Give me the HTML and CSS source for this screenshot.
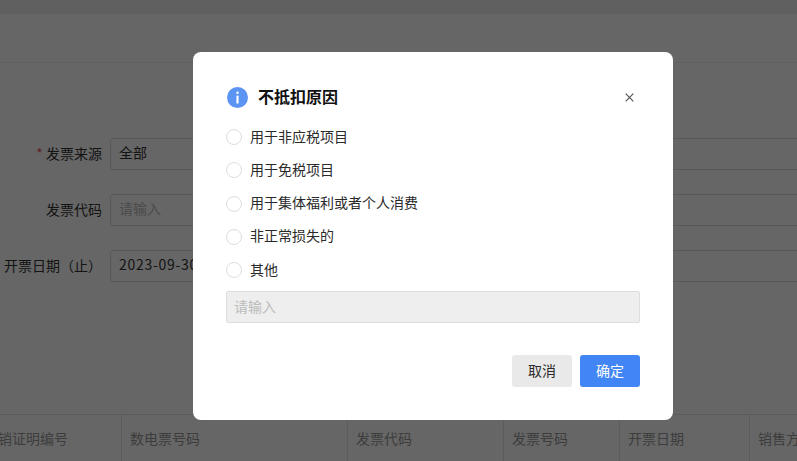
FILE: index.html
```html
<!DOCTYPE html>
<html lang="zh">
<head>
<meta charset="utf-8">
<title>不抵扣原因</title>
<link rel="stylesheet" href="styles.css">
</head>
<body>
<div class="page">
  <div class="topbar"></div>
  <div class="header"></div>
  <div class="form">
    <div class="row">
      <label class="label"><span class="req">*</span> 发票来源</label>
      <div class="field">全部</div>
      <div class="field-right"></div>
    </div>
    <div class="row">
      <label class="label">发票代码</label>
      <div class="field ph">请输入</div>
      <div class="field-right"></div>
    </div>
    <div class="row">
      <label class="label">开票日期（止）</label>
      <div class="field date">2023-09-30</div>
      <div class="field-right"></div>
    </div>
  </div>
  <div class="table-head">
    <div class="cell c1"><span class="clip">销证明编号</span></div>
    <div class="cell c2">数电票号码</div>
    <div class="cell c3">发票代码</div>
    <div class="cell c4">发票号码</div>
    <div class="cell c5">开票日期</div>
    <div class="cell c6">销售方</div>
  </div>
</div>
<div class="overlay"></div>
<div class="dialog">
  <div class="title-row">
    <svg class="info" viewBox="0 0 21 21" width="21" height="21" aria-hidden="true">
      <circle cx="10.5" cy="10.5" r="10.5" fill="#5b94f2"/>
      <circle cx="10.5" cy="5.8" r="1.3" fill="#fff"/>
      <rect x="9.4" y="8.5" width="2.2" height="8" rx="0.6" fill="#fff"/>
    </svg>
    <h2 class="title">不抵扣原因</h2>
    <svg class="close" viewBox="0 0 9 9" width="9" height="9" aria-hidden="true">
      <path d="M.7.7l7.6 7.6M8.3.7L.7 8.3" stroke="#555" stroke-width="1.2" fill="none"/>
    </svg>
  </div>
  <div class="options">
    <div class="option"><span class="radio"></span><span class="opt-text">用于非应税项目</span></div>
    <div class="option"><span class="radio"></span><span class="opt-text">用于免税项目</span></div>
    <div class="option"><span class="radio"></span><span class="opt-text">用于集体福利或者个人消费</span></div>
    <div class="option"><span class="radio"></span><span class="opt-text">非正常损失的</span></div>
    <div class="option"><span class="radio"></span><span class="opt-text">其他</span></div>
  </div>
  <div class="disabled-input">请输入</div>
  <div class="actions">
    <button class="btn cancel">取消</button>
    <button class="btn ok">确定</button>
  </div>
</div>
</body>
</html>
```

FILE: styles.css
```css
* { box-sizing: border-box; }
html, body { margin: 0; height: 100%; overflow: hidden; }
body {
  font-family: "Noto Sans CJK SC", "Liberation Sans", sans-serif;
  font-size: 14px;
  color: #333;
  background: #fff;
}
.page { width: 797px; height: 461px; display: flex; flex-direction: column; overflow: hidden; }
.topbar { height: 14px; background: #f0f0f0; flex: none; }
.header { height: 49px; border-bottom: 1px solid #f2f2f2; flex: none; }
.form { flex: none; height: 351px; padding-top: 75px; display: flex; flex-direction: column; gap: 24px; }
.row { display: flex; height: 32px; align-items: center; }
.label { width: 102px; text-align: right; white-space: nowrap; flex: none; color: #333; padding-bottom: 3px; direction: rtl; unicode-bidi: plaintext; }
.req { color: #e55; }
.field {
  margin-left: 8px; width: 300px; height: 32px; border: 1px solid #ddd; border-radius: 3px;
  padding-left: 8px; line-height: 27px; color: #333; flex: none;
}
.ph { color: #bbb; }
.date { letter-spacing: .7px; }
.field-right { margin-left: 80px; flex: 1; height: 32px; border: 1px solid #ddd; border-right: 0; }
.table-head { flex: none; height: 47px; display: flex; border-top: 1px solid #e4e4e4; color: #999; white-space: nowrap; line-height: 47px; }
.cell { border-right: 1px solid #e4e4e4; padding-left: 8px; flex: none; overflow: hidden; }
.c1 { width: 122px; padding-left: 0; }
.clip { display: block; margin-left: -2px; }
.c2 { width: 226px; }
.c3 { width: 156px; }
.c4 { width: 116px; }
.c5 { width: 130px; }
.c6 { width: 47px; border-right: 0; }
.overlay { position: absolute; inset: 0; background: rgba(0,0,0,.6); }
.dialog {
  position: absolute; left: 193px; top: 52px; width: 480px; height: 368px;
  background: #fff; border-radius: 8px; padding: 33px 33px 0;
  display: flex; flex-direction: column;
}
.title-row { display: flex; align-items: center; height: 24px; }
.info { flex: none; margin-left: 1px; }
.title { margin: 0 0 2px 10px; font-size: 16px; font-weight: 700; color: #111; line-height: 24px; flex: 1; }
.close { flex: none; margin-right: 6px; }
.options { display: flex; flex-direction: column; margin-top: 11.5px; }
.option { display: flex; align-items: center; height: 33.25px; color: #2a2a2a; }
.opt-text { margin-bottom: 3px; }
.radio { width: 16px; height: 16px; border: 1px solid #ddd; border-radius: 50%; margin-right: 8px; background: #fff; flex: none; }
.disabled-input {
  margin-top: 4.5px; height: 32px; background: #eee; border: 1px solid #ddd; border-radius: 2px;
  color: #bbb; padding-left: 7px; line-height: 28px;
}
.actions { display: flex; justify-content: flex-end; gap: 8px; margin-top: 32px; }
.btn { width: 60px; height: 32px; border: 0; border-radius: 3px; font: inherit; padding: 0 0 2px; }
.cancel { background: #e9e9e9; color: #2a2a2a; }
.ok { background: #4285f4; color: #fff; }
```
